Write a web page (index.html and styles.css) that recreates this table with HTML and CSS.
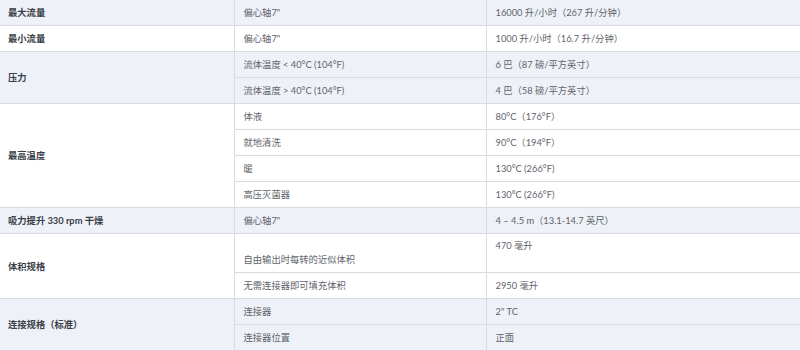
FILE: index.html
```html
<!DOCTYPE html>
<html lang="zh">
<head>
<meta charset="utf-8">
<link rel="stylesheet" href="styles.css">
</head>
<body>
<table class="spec">
  <colgroup><col class="c1"><col class="c2"><col class="c3"></colgroup>
  <tbody class="shade">
    <tr><th>最大流量</th><td>偏心轴7"</td><td>16000 升/小时（267 升/分钟）</td></tr>
  </tbody>
  <tbody>
    <tr><th>最小流量</th><td>偏心轴7"</td><td>1000 升/小时（16.7 升/分钟）</td></tr>
  </tbody>
  <tbody class="shade">
    <tr><th rowspan="2">压力</th><td>流体温度 &lt; 40°C (104°F)</td><td>6 巴（87 磅/平方英寸）</td></tr>
    <tr><td>流体温度 &gt; 40°C (104°F)</td><td>4 巴（58 磅/平方英寸）</td></tr>
  </tbody>
  <tbody>
    <tr><th rowspan="4">最高温度</th><td>体液</td><td>80°C（176°F）</td></tr>
    <tr><td>就地清洗</td><td>90°C（194°F）</td></tr>
    <tr><td>暖</td><td>130°C (266°F)</td></tr>
    <tr><td>高压灭菌器</td><td>130°C (266°F)</td></tr>
  </tbody>
  <tbody class="shade">
    <tr><th>吸力提升 330 rpm 干燥</th><td>偏心轴7"</td><td>4 – 4.5 m（13.1-14.7 英尺）</td></tr>
  </tbody>
  <tbody>
    <tr class="tall"><th rowspan="2">体积规格</th><td class="bottom">自由输出时每转的近似体积</td><td class="top">470 毫升</td></tr>
    <tr><td>无需连接器即可填充体积</td><td>2950 毫升</td></tr>
  </tbody>
  <tbody class="shade">
    <tr><th rowspan="2">连接规格（标准）</th><td>连接器</td><td>2" TC</td></tr>
    <tr><td>连接器位置</td><td>正面</td></tr>
  </tbody>
</table>
</body>
</html>
```

FILE: styles.css
```css
html, body {
  margin: 0;
  padding: 0;
  background: #ffffff;
}

.spec {
  width: 800px;
  table-layout: fixed;
  border-collapse: collapse;
  font-family: Lato, "Noto Sans CJK SC", sans-serif;
  font-size: 9.3px;
  color: #5f646b;
}

.c1 { width: 234px; }
.c2 { width: 252px; }
.c3 { width: 314px; }

.spec th,
.spec td {
  height: 25px;
  padding: 0 9px;
  text-align: left;
  vertical-align: middle;
  border-bottom: 1px solid #d7dbe2;
  line-height: 13px;
  white-space: nowrap;
}

.spec td {
  border-left: 1px solid #d7dbe2;
  padding-left: 9px;
}

.spec th {
  font-weight: 700;
  color: #3b4047;
  padding-left: 8px;
}

.shade th,
.shade td {
  background: #eef1f7;
}

.spec .tall td {
  height: 27px;
}

.spec td.top {
  vertical-align: top;
  padding-top: 5px;
  padding-bottom: 6px;
}

.spec td.bottom {
  vertical-align: bottom;
  padding-top: 5px;
  padding-bottom: 6px;
}
```
